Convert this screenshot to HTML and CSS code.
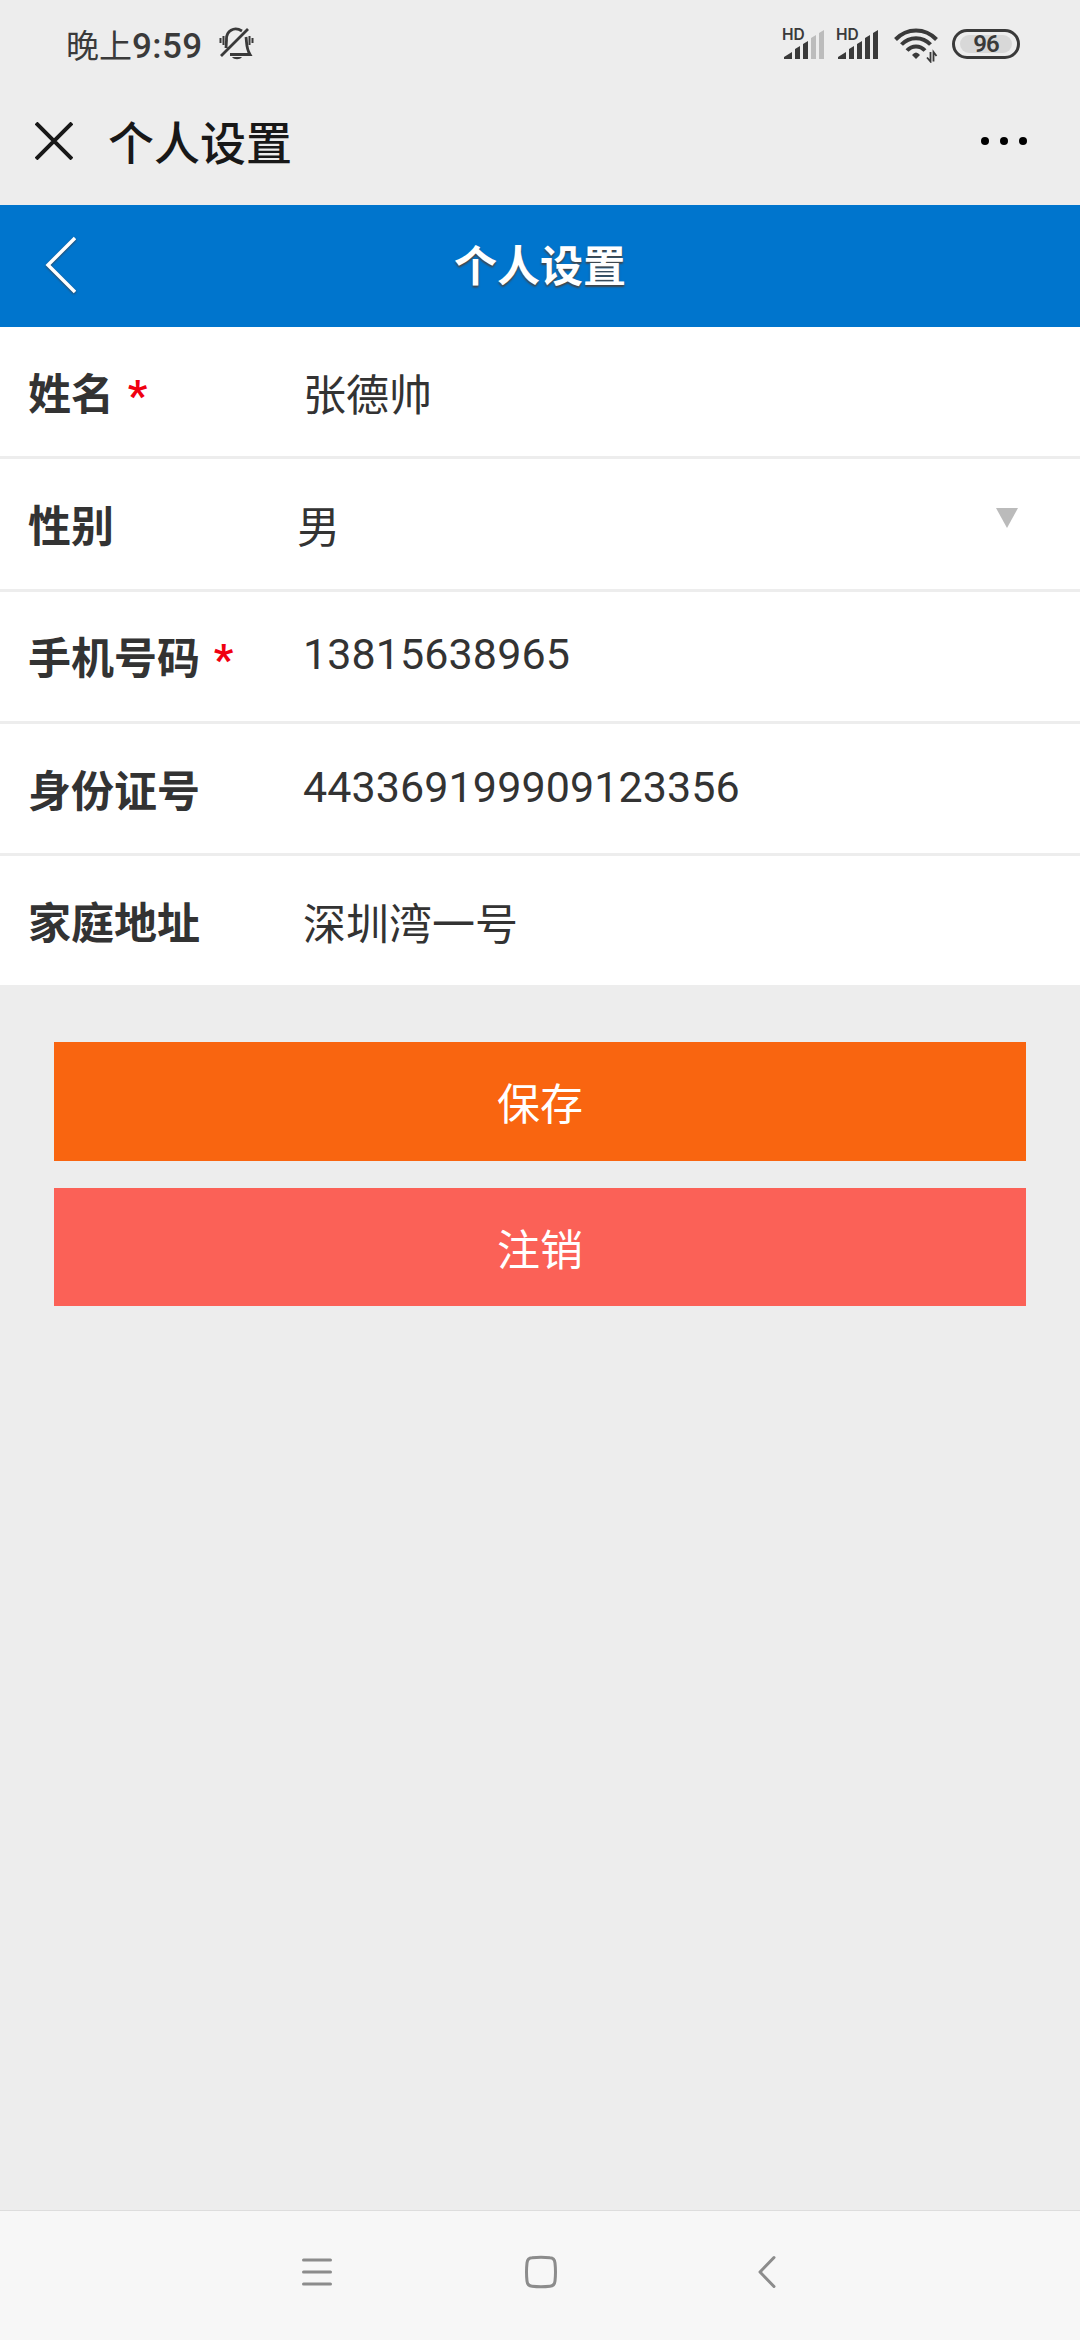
FILE: index.html
```
<!DOCTYPE html>
<html lang="zh-CN">
<head>
    <meta charset="UTF-8">
    <meta name="viewport" content="width=device-width, initial-scale=1.0">
    <title>个人设置</title>
    <link rel="stylesheet" href="styles.css">
</head>
<body>
    <div class="status-bar">
        <span class="time">晚上<b>9:59</b></span>
        <svg class="bell" width="36" height="36" viewBox="0 0 36 36" fill="none" stroke="#3a3a3a" stroke-width="2.8">
            <path d="M2 30L29 3M23 5C15 0 7 5 7.5 14L7 22M27 11C28 18 27 22 31 28.500H11"/>
            <path d="M13 31h10c-2 3-8 3-10 0z" fill="#3a3a3a" stroke="none"/>
            <path d="M1.500 12v5M4.500 10v9M30.500 10v9M33.500 12v5" stroke-width="2"/>
        </svg>
        <div class="status-icons">
            <svg class="signal" width="44" height="36" viewBox="-2 -2 44 36" fill="#3a3a3a">
                <text class="hd" x="-1" y="11.500">HD</text>
                <path d="M1 31v-2l8-5v7zM12 31V21l5-3v13zM20 31V16l5-3v18z"/>
                <path d="M28 31V10l5-3v24zM36 31V5l5-3v29z" fill="#bcbcbc"/>
            </svg>
            <svg class="signal" width="44" height="36" viewBox="-2 -2 44 36" fill="#3a3a3a">
                <text class="hd" x="-1" y="11.500">HD</text>
                <path d="M1 31v-2l8-5v7zM12 31V21l5-3v13zM20 31V16l5-3v18zM28 31V10l5-3v24zM36 31V5l5-3v29z"/>
            </svg>
            <svg class="wifi" width="44" height="36" viewBox="0 0 44 36" fill="none" stroke="#3a3a3a" stroke-width="4">
                <path d="M1.500 12.500C13 .5 31 .5 42.500 12.500M7.500 17.500c8-8.500 21-8.500 29 0M13 23.500c5-5.500 13-5.500 18 0"/>
                <path d="M18 28q4-5 8 0l-4 4z" fill="#3a3a3a" stroke="none"/>
                <path d="M36.500 25v9.500l-3.500-4M39.500 34.500V25l3 4" stroke-width="1.800"/>
            </svg>
            <div class="battery"><span>96</span></div>
        </div>
    </div>

    <div class="title-bar">
        <svg width="38" height="38" viewBox="0 0 38 38" fill="none" stroke="#181818" stroke-width="4">
            <path d="M1 1L37 37M37 1L1 37"/>
        </svg>
        <span class="page-title">个人设置</span>
        <svg class="more" width="46" height="8" viewBox="0 0 46 8">
            <circle cx="4" cy="4" r="4"/>
            <circle cx="23" cy="4" r="4"/>
            <circle cx="42" cy="4" r="4"/>
        </svg>
    </div>

    <header class="header">
        <svg class="back" width="32" height="58" viewBox="0 0 32 58" fill="none" stroke="#fff" stroke-width="3.500">
            <path d="M31 2L4 29L31 56"/>
        </svg>
        <h1>个人设置</h1>
    </header>

    <div class="form">
        <div class="row">
            <label>姓名 <em>*</em></label>
            <span class="value">张德帅</span>
        </div>
        <div class="row">
            <label>性别</label>
            <span class="value select">男</span>
            <svg class="arrow" width="22" height="20" viewBox="0 0 22 20"><path d="M0 0h22L11 20z" fill="#bbb"/></svg>
        </div>
        <div class="row">
            <label>手机号码 <em>*</em></label>
            <span class="value number">13815638965</span>
        </div>
        <div class="row">
            <label>身份证号</label>
            <span class="value number">443369199909123356</span>
        </div>
        <div class="row">
            <label>家庭地址</label>
            <span class="value">深圳湾一号</span>
        </div>
    </div>

    <div class="buttons">
        <button class="btn save">保存</button>
        <button class="btn logout">注销</button>
    </div>

    <nav class="nav-bar">
        <svg width="34" height="34" viewBox="0 0 34 34" stroke="#8c8c8c" stroke-width="3" stroke-linecap="round">
            <path d="M3.500 5h27M3.500 17h27M3.500 29h27"/>
        </svg>
        <svg width="34" height="34" viewBox="0 0 34 34" fill="none" stroke="#8c8c8c" stroke-width="3">
            <path d="M8 2.800Q17 1.800 26 2.800Q30.500 3 31 8Q32 17 31 26Q30.500 31 26 31.200Q17 32.200 8 31.200Q3.500 31 3 26Q2 17 3 8Q3.500 3 8 2.800z"/>
        </svg>
        <svg width="34" height="34" viewBox="0 0 34 34" fill="none" stroke="#8c8c8c" stroke-width="3" stroke-linecap="round" stroke-linejoin="round">
            <path d="M26 2.500L12 17L26 31.500"/>
        </svg>
    </nav>
</body>
</html>
```
FILE: styles.css
```
* {
    box-sizing: border-box;
}
body {
    margin: 0;
    height: 2340px;
    display: flex;
    flex-direction: column;
    background-color: #ededed;
    font-family: Roboto, "Noto Sans CJK SC", sans-serif;
    font-size: 43px;
    color: #333;
}
svg {
    display: block;
    flex-shrink: 0;
}

/* Phone status bar */
.status-bar {
    height: 88px;
    padding: 0 60px 0 66px;
    display: flex;
    align-items: center;
}
.time {
    font-size: 33px;
    font-weight: 400;
    color: #3a3a3a;
    font-family: "Noto Sans CJK SC", sans-serif;
}
.time b {
    font-family: Roboto, sans-serif;
    font-size: 35px;
    font-weight: 500;
    letter-spacing: 0.4px;
}
.bell {
    margin-left: 16px;
}
.status-icons {
    margin-left: auto;
    display: flex;
    align-items: center;
}
.signal {
    margin-right: 10px;
}
.hd {
    font: 600 15.5px Inter, sans-serif;
}
.wifi {
    margin: 2px 14px 0 5px;
}
.battery {
    width: 68px;
    height: 30px;
    padding: 3px 5px;
    border: 3px solid #3a3a3a;
    border-radius: 15px;
}
.battery span {
    display: block;
    height: 18px;
    line-height: 19px;
    border-radius: 9px;
    background-color: #d8d8d8;
    text-align: center;
    font-size: 24px;
    font-weight: 600;
    letter-spacing: -1px;
    color: #3a3a3a;
}

/* App title */
.title-bar {
    height: 117px;
    padding: 0 53px 11px 35px;
    display: flex;
    align-items: center;
}
.page-title {
    margin-left: 35px;
    padding-bottom: 3px;
    font-size: 46px;
    font-weight: 500;
    color: #181818;
}
.more {
    margin-left: auto;
}

.header {
    height: 122px;
    padding-bottom: 7px;
    display: flex;
    align-items: center;
    justify-content: center;
    background-color: #0075cd;
    position: relative;
}
.header h1 {
    margin: 0;
    font-size: 43px;
    color: #fff;
    text-shadow: 0 2px 2px #444;
}
.back {
    position: absolute;
    top: 31px;
    left: 44px;
    filter: drop-shadow(0 1px 1px #345);
}

/* Form rows */
.form {
    background-color: #fff;
}
.row {
    height: 132.3px;
    padding: 0 62px 0 28px;
    display: flex;
    align-items: center;
    border-bottom: 3px solid #ededed;
}
.row:last-child {
    height: 129px;
    border-bottom: 0;
}
.row label {
    width: 275px;
    padding-bottom: 2px;
    font-weight: 700;
}
.row em {
    margin-left: 3px;
    color: #f00010;
    font-style: normal;
}
.value {
    flex: 1;
}
.value.select {
    margin-left: -6px;
}
.value.number {
    padding-bottom: 4px;
    letter-spacing: 0.1px;
}
.arrow {
    margin-bottom: 12px;
}

/* Buttons */
.buttons {
    padding: 57px 54px 0;
    display: flex;
    flex-direction: column;
    gap: 27px;
}
.btn {
    height: 118.6px;
    padding: 0;
    border: 0;
    font: inherit;
    color: #fff;
}
.save {
    background-color: #f96510;
}
.logout {
    background-color: #fb6157;
}

.nav-bar {
    height: 130px;
    margin-top: auto;
    padding: 0 298px 8px 300px;
    display: flex;
    align-items: center;
    justify-content: space-between;
    border-top: 1px solid #ddd;
    background-color: #f7f7f7;
}
```
